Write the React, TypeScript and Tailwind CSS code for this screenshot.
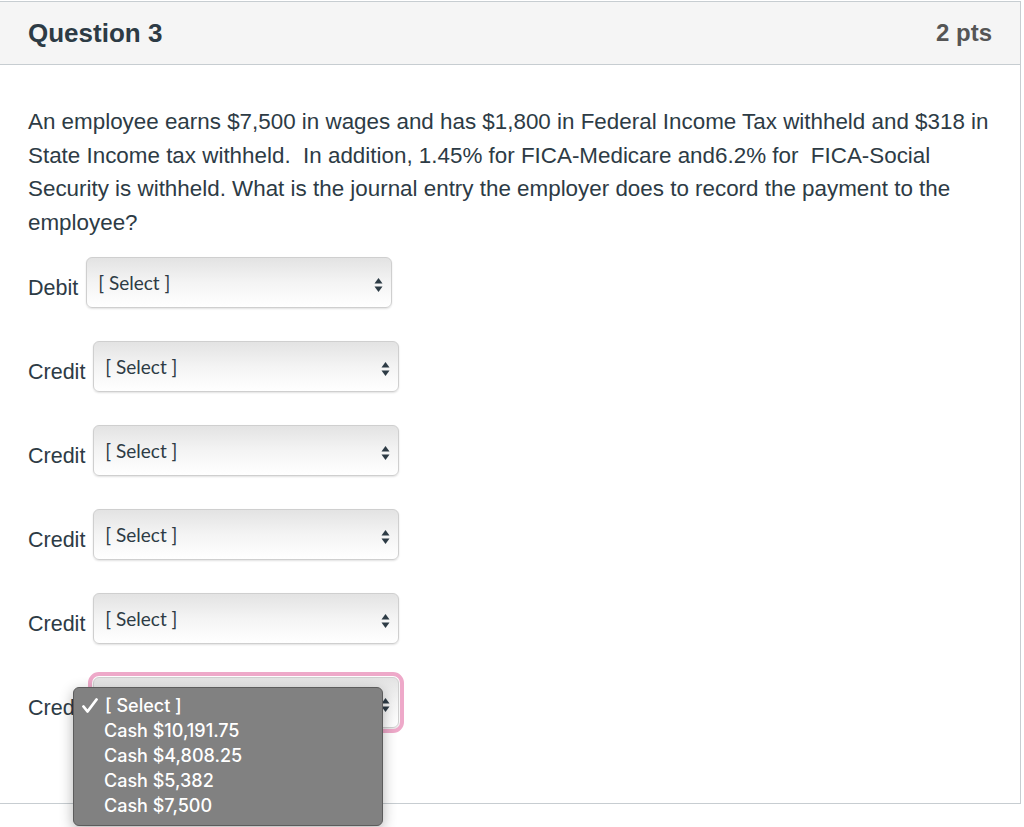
import React from 'react';

const Arrows: React.FC = () => (
  <svg width="9" height="14" viewBox="0 0 9 14" className="mt-[7px] shrink-0">
    <path d="M4.5 0 L8.5 5.5 L0.5 5.5 Z" fill="#2d3b45" />
    <path d="M4.5 14 L8.5 8.5 L0.5 8.5 Z" fill="#2d3b45" />
  </svg>
);

const Check: React.FC = () => (
  <svg width="16" height="16" viewBox="0 0 16 16" className="shrink-0">
    <path d="M1.5 8.5 L5.5 13.5 L14.5 1.5" fill="none" stroke="white" strokeWidth="2.8" strokeLinecap="round" strokeLinejoin="round" />
  </svg>
);

const SelectBox: React.FC<{ focused?: boolean; empty?: boolean }> = ({ focused, empty }) => (
  <div
    className={
      'flex h-[51px] w-[306px] items-start justify-between rounded-[6px] border border-[#cfcfcf] bg-gradient-to-b from-[#e3e3e3] via-[#f4f4f4] to-white pl-[11px] pr-[8px] pt-[13px] shadow-[0_1px_2px_rgba(0,0,0,0.12)] ' +
      (focused ? 'outline-[4px] outline-solid outline-[#eea9c9] outline-offset-[1px]' : '')
    }
  >
    <span className="font-['Lato'] text-[19px] leading-[24px] text-[#2d3b45]">{empty ? '' : '[ Select ]'}</span>
    <Arrows />
  </div>
);

const Row: React.FC<{ label: string; focused?: boolean; empty?: boolean }> = ({ label, focused, empty }) => (
  <div className="flex items-start gap-[8px]">
    <span className="mt-[19px] text-[21.5px] leading-[24px] text-[#2d3b45]">{label}</span>
    <SelectBox focused={focused} empty={empty} />
  </div>
);

export default function App() {
  const options = ['Cash $10,191.75', 'Cash $4,808.25', 'Cash $5,382', 'Cash $7,500'];
  return (
    <div className="relative h-[827px] w-[1024px] overflow-hidden bg-white font-['Liberation_Sans',sans-serif]">
      <div className="mt-px h-[803px] w-[1021px] border border-l-0 border-[#c7cdd1]">
        <div className="flex h-[63px] items-center justify-between border-b border-[#c7cdd1] bg-[#f5f5f5] pl-[28px] pr-[28px]">
          <h2 className="text-[26px] font-bold text-[#2d3b45]">Question 3</h2>
          <span className="text-[24px] font-bold text-[#555555]">2 pts</span>
        </div>
        <div className="px-[28px] pt-[40px]">
          <p className="text-[22.4px] leading-[33.6px] text-[#2d3b45]">
            An employee earns $7,500 in wages and has $1,800 in Federal Income Tax withheld and $318 in
            <br />
            State Income tax withheld.&nbsp; In addition, 1.45% for FICA-Medicare and6.2% for&nbsp; FICA-Social
            <br />
            Security is withheld. What is the journal entry the employer does to record the payment to the
            <br />
            employee?
          </p>
          <div className="mt-[18px] flex flex-col gap-[33px]">
            <Row label="Debit" />
            <Row label="Credit" />
            <Row label="Credit" />
            <Row label="Credit" />
            <Row label="Credit" />
            <Row label="Credit" focused empty />
          </div>
        </div>
      </div>

      <div className="absolute left-[73px] top-[687px] h-[139px] w-[310px] rounded-[6px] border border-[#5c5c5c] bg-[#818181] pt-[5px] shadow-[0_4px_14px_rgba(0,0,0,0.3)] font-['Inter',sans-serif]">
        <div className="flex items-center text-[18px] font-medium leading-[25px] text-white">
          <span className="flex w-[31px] justify-start pl-[8px]">
            <Check />
          </span>
          <span>[ Select ]</span>
        </div>
        {options.map((o) => (
          <div key={o} className="pl-[30px] text-[18px] font-medium leading-[25px] text-white">
            {o}
          </div>
        ))}
      </div>
    </div>
  );
}
